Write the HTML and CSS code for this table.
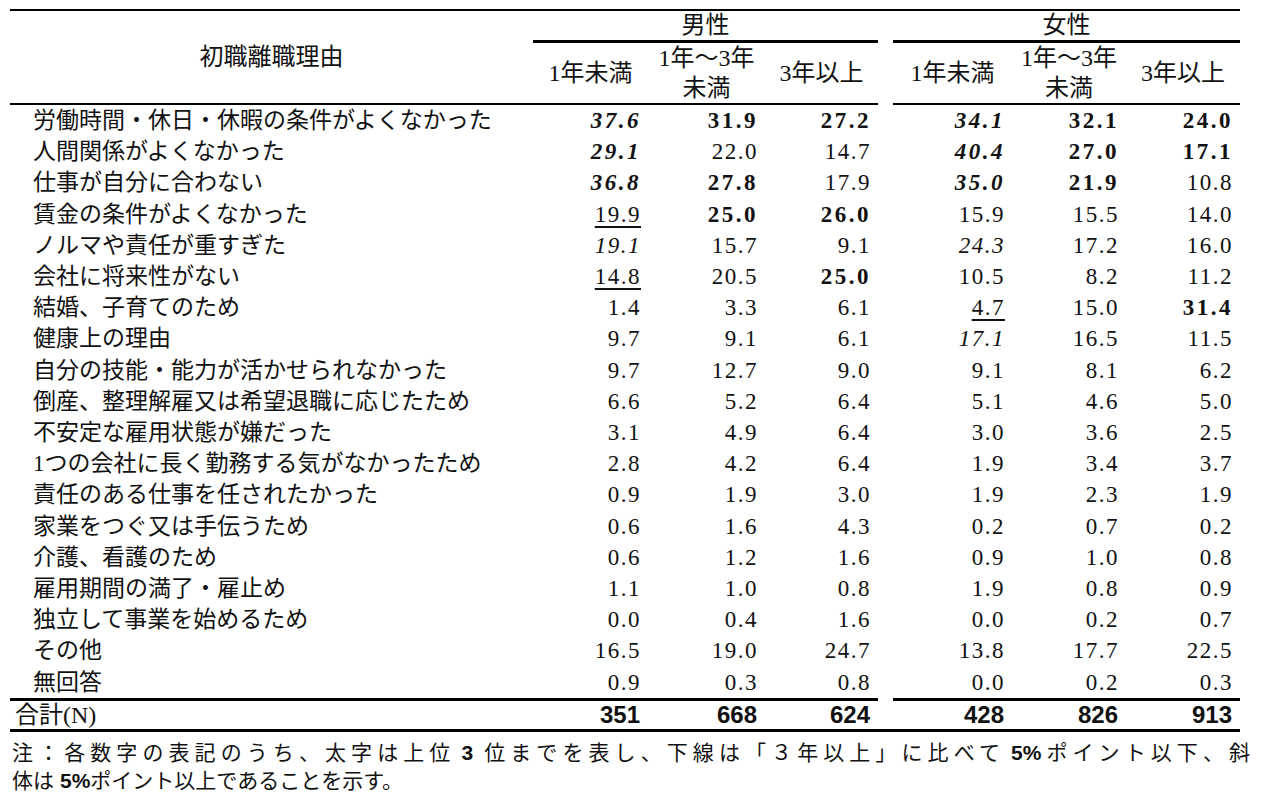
FILE: index.html
```html
<!DOCTYPE html>
<html lang="ja">
<head>
<meta charset="utf-8">
<title>初職離職理由</title>
<link rel="stylesheet" href="styles.css">
</head>
<body>
<table class="tbl">
  <colgroup>
    <col class="c-label"><col class="c-m1"><col class="c-m2"><col class="c-m3"><col class="c-gap"><col class="c-f1"><col class="c-f2"><col class="c-f3">
  </colgroup>
  <thead>
    <tr class="hrow1">
      <th class="h-label" rowspan="2">初職離職理由</th>
      <th class="h-group" colspan="3">男性</th>
      <th class="gap"></th>
      <th class="h-group" colspan="3">女性</th>
    </tr>
    <tr class="hrow2">
      <th class="h-sub">1年未満</th>
      <th class="h-sub h-two">1年～3年<br>未満</th>
      <th class="h-sub">3年以上</th>
      <th class="gap"></th>
      <th class="h-sub">1年未満</th>
      <th class="h-sub h-two">1年～3年<br>未満</th>
      <th class="h-sub">3年以上</th>
    </tr>
  </thead>
  <tbody>
    <tr><td class="lbl">労働時間・休日・休暇の条件がよくなかった</td><td class="n bi">37.6</td><td class="n b">31.9</td><td class="n b">27.2</td><td class="gap"></td><td class="n bi">34.1</td><td class="n b">32.1</td><td class="n b">24.0</td></tr>
    <tr><td class="lbl">人間関係がよくなかった</td><td class="n bi">29.1</td><td class="n">22.0</td><td class="n">14.7</td><td class="gap"></td><td class="n bi">40.4</td><td class="n b">27.0</td><td class="n b">17.1</td></tr>
    <tr><td class="lbl">仕事が自分に合わない</td><td class="n bi">36.8</td><td class="n b">27.8</td><td class="n">17.9</td><td class="gap"></td><td class="n bi">35.0</td><td class="n b">21.9</td><td class="n">10.8</td></tr>
    <tr><td class="lbl">賃金の条件がよくなかった</td><td class="n"><span class="u">19.9</span></td><td class="n b">25.0</td><td class="n b">26.0</td><td class="gap"></td><td class="n">15.9</td><td class="n">15.5</td><td class="n">14.0</td></tr>
    <tr><td class="lbl">ノルマや責任が重すぎた</td><td class="n i">19.1</td><td class="n">15.7</td><td class="n">9.1</td><td class="gap"></td><td class="n i">24.3</td><td class="n">17.2</td><td class="n">16.0</td></tr>
    <tr><td class="lbl">会社に将来性がない</td><td class="n"><span class="u">14.8</span></td><td class="n">20.5</td><td class="n b">25.0</td><td class="gap"></td><td class="n">10.5</td><td class="n">8.2</td><td class="n">11.2</td></tr>
    <tr><td class="lbl">結婚、子育てのため</td><td class="n">1.4</td><td class="n">3.3</td><td class="n">6.1</td><td class="gap"></td><td class="n"><span class="u">4.7</span></td><td class="n">15.0</td><td class="n b">31.4</td></tr>
    <tr><td class="lbl">健康上の理由</td><td class="n">9.7</td><td class="n">9.1</td><td class="n">6.1</td><td class="gap"></td><td class="n i">17.1</td><td class="n">16.5</td><td class="n">11.5</td></tr>
    <tr><td class="lbl">自分の技能・能力が活かせられなかった</td><td class="n">9.7</td><td class="n">12.7</td><td class="n">9.0</td><td class="gap"></td><td class="n">9.1</td><td class="n">8.1</td><td class="n">6.2</td></tr>
    <tr><td class="lbl">倒産、整理解雇又は希望退職に応じたため</td><td class="n">6.6</td><td class="n">5.2</td><td class="n">6.4</td><td class="gap"></td><td class="n">5.1</td><td class="n">4.6</td><td class="n">5.0</td></tr>
    <tr><td class="lbl">不安定な雇用状態が嫌だった</td><td class="n">3.1</td><td class="n">4.9</td><td class="n">6.4</td><td class="gap"></td><td class="n">3.0</td><td class="n">3.6</td><td class="n">2.5</td></tr>
    <tr><td class="lbl">1つの会社に長く勤務する気がなかったため</td><td class="n">2.8</td><td class="n">4.2</td><td class="n">6.4</td><td class="gap"></td><td class="n">1.9</td><td class="n">3.4</td><td class="n">3.7</td></tr>
    <tr><td class="lbl">責任のある仕事を任されたかった</td><td class="n">0.9</td><td class="n">1.9</td><td class="n">3.0</td><td class="gap"></td><td class="n">1.9</td><td class="n">2.3</td><td class="n">1.9</td></tr>
    <tr><td class="lbl">家業をつぐ又は手伝うため</td><td class="n">0.6</td><td class="n">1.6</td><td class="n">4.3</td><td class="gap"></td><td class="n">0.2</td><td class="n">0.7</td><td class="n">0.2</td></tr>
    <tr><td class="lbl">介護、看護のため</td><td class="n">0.6</td><td class="n">1.2</td><td class="n">1.6</td><td class="gap"></td><td class="n">0.9</td><td class="n">1.0</td><td class="n">0.8</td></tr>
    <tr><td class="lbl">雇用期間の満了・雇止め</td><td class="n">1.1</td><td class="n">1.0</td><td class="n">0.8</td><td class="gap"></td><td class="n">1.9</td><td class="n">0.8</td><td class="n">0.9</td></tr>
    <tr><td class="lbl">独立して事業を始めるため</td><td class="n">0.0</td><td class="n">0.4</td><td class="n">1.6</td><td class="gap"></td><td class="n">0.0</td><td class="n">0.2</td><td class="n">0.7</td></tr>
    <tr><td class="lbl">その他</td><td class="n">16.5</td><td class="n">19.0</td><td class="n">24.7</td><td class="gap"></td><td class="n">13.8</td><td class="n">17.7</td><td class="n">22.5</td></tr>
    <tr class="last"><td class="lbl">無回答</td><td class="n">0.9</td><td class="n">0.3</td><td class="n">0.8</td><td class="gap"></td><td class="n">0.0</td><td class="n">0.2</td><td class="n">0.3</td></tr>
  </tbody>
  <tfoot>
    <tr class="total"><td class="tlbl">合計(N)</td><td class="tn">351</td><td class="tn">668</td><td class="tn">624</td><td class="gap"></td><td class="tn">428</td><td class="tn">826</td><td class="tn">913</td></tr>
  </tfoot>
</table>
<div class="note">
  <div class="note-l1">注：各数字の表記のうち、太字は上位<b class="nb nb-both">3</b>位までを表し、下線は「３年以上」に比べて<b class="nb">5%</b>ポイント以下、斜</div>
  <div class="note-l2">体は<b class="nb">5%</b>ポイント以上であることを示す。</div>
</div>
</body>
</html>
```

FILE: styles.css
```css
html, body {
  margin: 0;
  padding: 0;
  background: #fff;
  color: #111;
}

body {
  font-family: "Liberation Serif", "Noto Sans CJK JP", serif;
}

.tbl {
  margin: 9px 0 0 10px;
  width: 1230px;
  table-layout: fixed;
  border-collapse: separate;
  border-spacing: 0;
  font-size: 24px;
}

.c-label { width: 523px; }
.c-m1 { width: 115px; }
.c-m2 { width: 117px; }
.c-m3 { width: 113px; }
.c-gap { width: 15px; }
.c-f1 { width: 119px; }
.c-f2 { width: 114px; }
.c-f3 { width: 114px; }

.tbl th, .tbl td {
  padding: 0;
  font-weight: normal;
  white-space: nowrap;
}

.hrow1 th {
  border-top: 2px solid #000;
  height: 29px;
  line-height: 29px;
  vertical-align: middle;
}

.tbl .h-label {
  text-align: center;
  border-bottom: 2px solid #000;
  vertical-align: middle;
}

.tbl .h-group {
  text-align: center;
  border-bottom: 3px solid #000;
}

.hrow2 th {
  height: 59px;
  vertical-align: middle;
  text-align: center;
  line-height: 30px;
}

.hrow2 .h-sub {
  border-bottom: 2px solid #000;
}

.tbl tbody td {
  height: 31.2px;
  line-height: 31.2px;
  vertical-align: middle;
}

.tbl .lbl {
  padding-left: 23px;
  font-size: 23px;
}

.tbl .n {
  text-align: right;
  padding-right: 7px;
  font-family: "Liberation Serif", serif;
  font-size: 23px;
  letter-spacing: 1.5px;
}

.tbl .n.b {
  font-weight: bold;
  letter-spacing: 2.5px;
}

.tbl .n.bi {
  font-weight: bold;
  font-style: italic;
  letter-spacing: 2.5px;
}

.tbl .n.i {
  font-style: italic;
}

.u {
  text-decoration: underline;
  text-decoration-thickness: 1.5px;
  text-underline-offset: 4px;
}

.tbl tbody tr.last td {
  border-bottom: 3px solid #000;
}

.tbl tbody tr.last td.gap {
  border-bottom: none;
}

.total td {
  height: 28px;
  line-height: 28px;
  vertical-align: middle;
  border-bottom: 3px solid #000;
}

.tbl .tlbl {
  padding-left: 5px;
}

.tbl .tn {
  text-align: right;
  padding-right: 8px;
  font-family: "Liberation Sans Narrow", "Liberation Sans", sans-serif;
  font-weight: bold;
  font-size: 24px;
}

.note {
  margin: 7px 0 0 12px;
  width: 1238px;
  font-size: 21px;
  line-height: 28px;
}

.note-l1 {
  text-align: justify;
  text-align-last: justify;
}

.nb {
  font-family: "Liberation Sans", sans-serif;
  font-weight: bold;
  margin-left: 6px;
}

.nb-both {
  margin-right: 6px;
}
```
